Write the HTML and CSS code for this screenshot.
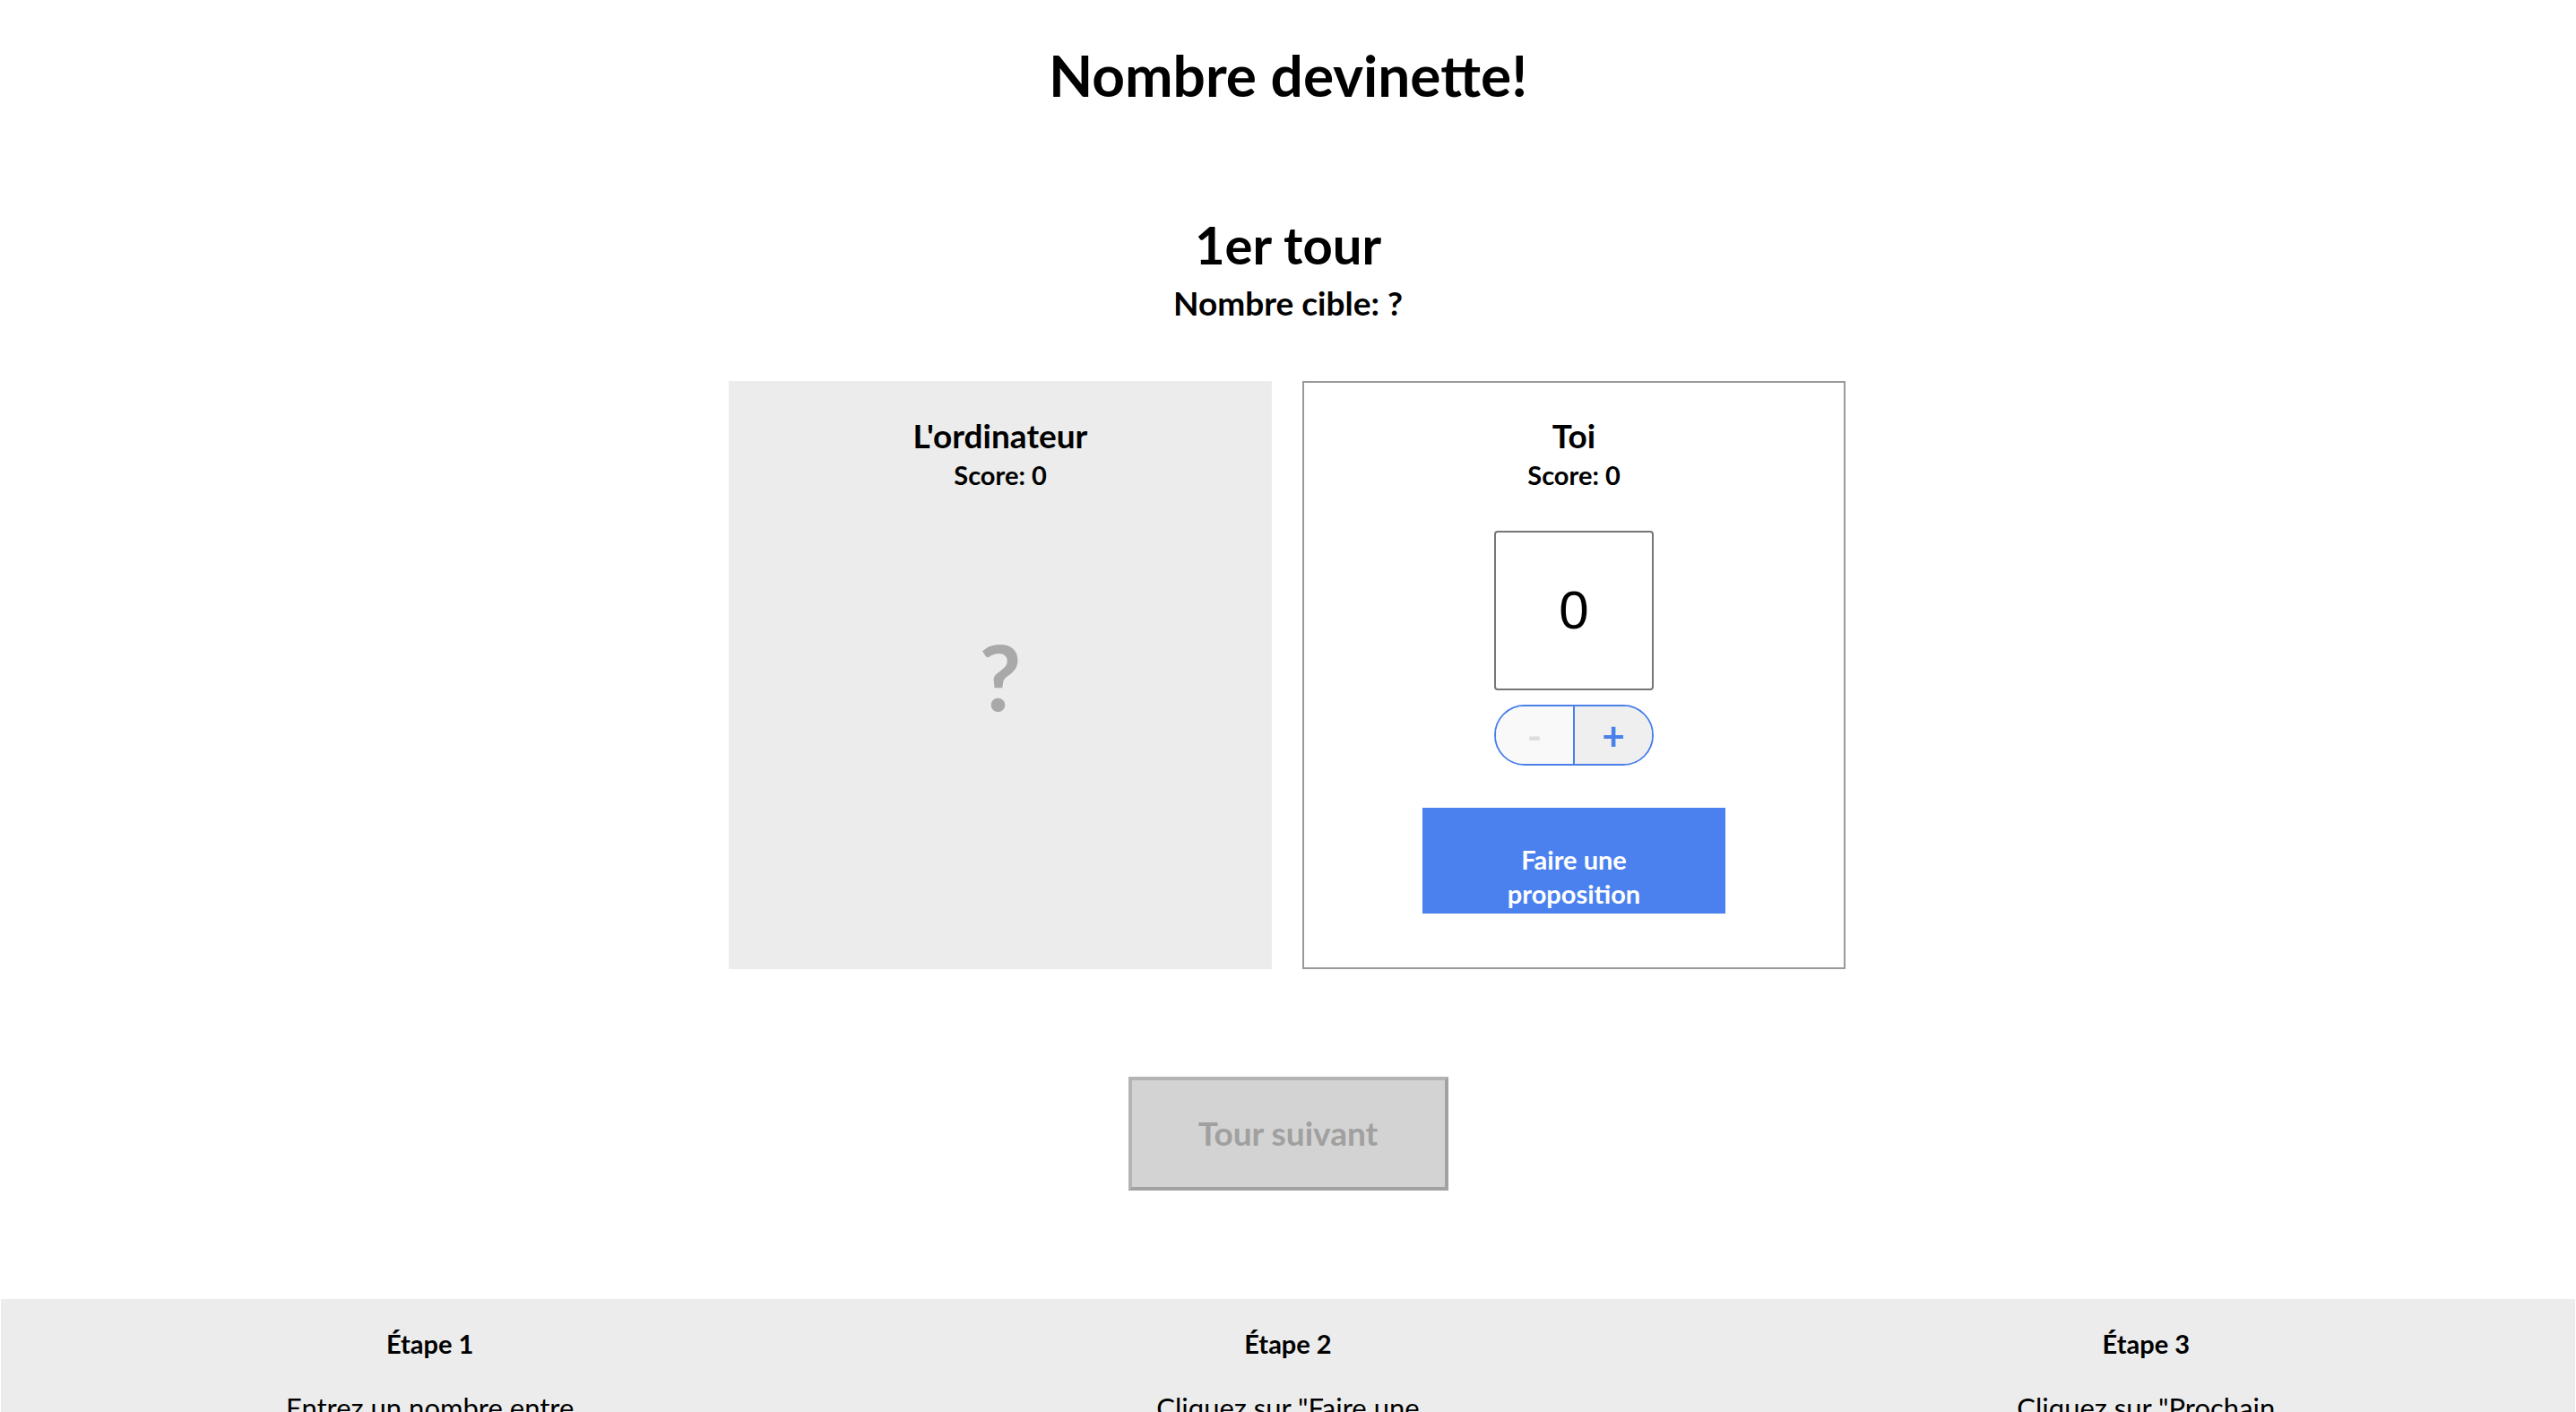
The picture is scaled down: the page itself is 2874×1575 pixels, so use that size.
FILE: index.html
```html
<!DOCTYPE html>
<html lang="fr">
<head>
<meta charset="utf-8">
<title>Nombre devinette!</title>
<link rel="stylesheet" href="styles.css">
</head>
<body>
<main class="game">
  <h1 class="title">Nombre devinette!</h1>
  <h2 class="round">1er tour</h2>
  <p class="target">Nombre cible: ?</p>
  <section class="boards">
    <div class="card card-computer">
      <h3 class="card-name">L'ordinateur</h3>
      <p class="card-score">Score: 0</p>
      <div class="mystery">?</div>
    </div>
    <div class="card card-player">
      <h3 class="card-name">Toi</h3>
      <p class="card-score">Score: 0</p>
      <input class="guess-input" type="text" value="0" readonly>
      <div class="stepper">
        <button class="step step-minus" disabled>-</button>
        <button class="step step-plus">+</button>
      </div>
      <button class="guess-btn">Faire une proposition</button>
    </div>
  </section>
  <button class="next-btn" disabled>Tour suivant</button>
</main>
<footer class="steps">
  <div class="step-col">
    <h4 class="step-title">Étape 1</h4>
    <p class="step-text">Entrez un nombre entre 0 et 9</p>
  </div>
  <div class="step-col">
    <h4 class="step-title">Étape 2</h4>
    <p class="step-text">Cliquez sur "Faire une proposition"</p>
  </div>
  <div class="step-col">
    <h4 class="step-title">Étape 3</h4>
    <p class="step-text">Cliquez sur "Prochain tour"</p>
  </div>
</footer>
</body>
</html>
```
FILE: styles.css
```css
html, body {
  margin: 0;
  padding: 0;
  background: #ffffff;
}
body {
  font-family: Lato, "Noto Sans", "Liberation Sans", sans-serif;
  color: #000;
  line-height: 1.2;
}
.game {
  display: flex;
  flex-direction: column;
  align-items: center;
}
.title {
  margin: 46px 0 0;
  font-size: 64px;
  font-weight: 700;
  line-height: 1.2;
}
.round {
  margin: 115px 0 0;
  font-size: 58px;
  font-weight: 700;
  line-height: 1.2;
}
.target {
  margin: 9px 0 0;
  font-size: 37px;
  font-weight: 700;
}
.boards {
  margin-top: 64px;
  display: flex;
  gap: 34px;
  padding-right: 2px;
}
.card {
  box-sizing: border-box;
  width: 606px;
  height: 656px;
  display: flex;
  flex-direction: column;
  align-items: center;
  padding-top: 39px;
}
.card-computer {
  background: #ececec;
}
.card-player {
  border: 2px solid #999999;
  background: #fff;
  padding-top: 37px;
}
.card-name {
  margin: 0;
  font-size: 37px;
  font-weight: 700;
}
.card-score {
  margin: 5px 0 0;
  font-size: 29px;
  font-weight: 700;
}
.mystery {
  flex: 1;
  display: flex;
  align-items: center;
  justify-content: center;
  font-size: 102px;
  font-weight: 700;
  color: #a9a9a9;
  padding-bottom: 120px;
}
.guess-input {
  box-sizing: border-box;
  margin-top: 44px;
  width: 178px;
  height: 178px;
  border: 2px solid #767676;
  border-radius: 4px;
  text-align: center;
  font-family: "Liberation Sans", Arial, sans-serif;
  font-size: 60px;
  color: #000;
  padding: 0;
  outline: none;
}
.stepper {
  box-sizing: border-box;
  margin-top: 16px;
  width: 178px;
  height: 68px;
  display: flex;
  border: 2px solid #4a80ea;
  border-radius: 34px;
  overflow: hidden;
}
.step {
  flex: 1;
  border: 0;
  margin: 0;
  padding: 0;
  font-family: Lato, sans-serif;
  font-weight: 700;
  font-size: 44px;
  line-height: 1;
}
.step-minus {
  background: #f9f9f9;
  color: #dddddd;
  border-right: 2px solid #4a80ea;
}
.step-plus {
  background: #efefef;
  color: #4a80ea;
}
.guess-btn {
  box-sizing: border-box;
  margin-top: 47px;
  width: 338px;
  height: 118px;
  padding: 39px 45px 3px;
  border: 0;
  background: #4b81ee;
  color: #fff;
  font-family: Lato, sans-serif;
  font-size: 29px;
  font-weight: 700;
  line-height: 38px;
  text-align: center;
}
.next-btn {
  box-sizing: border-box;
  margin-top: 120px;
  width: 357px;
  height: 127px;
  border-style: solid;
  border-width: 4px;
  border-color: #b4b4b4 #a2a2a2 #a2a2a2 #b4b4b4;
  background: #d3d3d3;
  color: #a0a0a0;
  font-family: Lato, sans-serif;
  font-size: 37px;
  font-weight: 700;
  padding: 0 0 2px;
}
.steps {
  margin: 121px 1px 0;
  background: #ececec;
  display: flex;
  padding-top: 33px;
  padding-bottom: 40px;
}
.step-col {
  flex: 1;
  display: flex;
  flex-direction: column;
  align-items: center;
  text-align: center;
}
.step-title {
  margin: 0;
  font-size: 29px;
  font-weight: 700;
}
.step-text {
  margin: 35px 0 0;
  max-width: 345px;
  font-size: 31px;
  font-weight: 400;
}
```
